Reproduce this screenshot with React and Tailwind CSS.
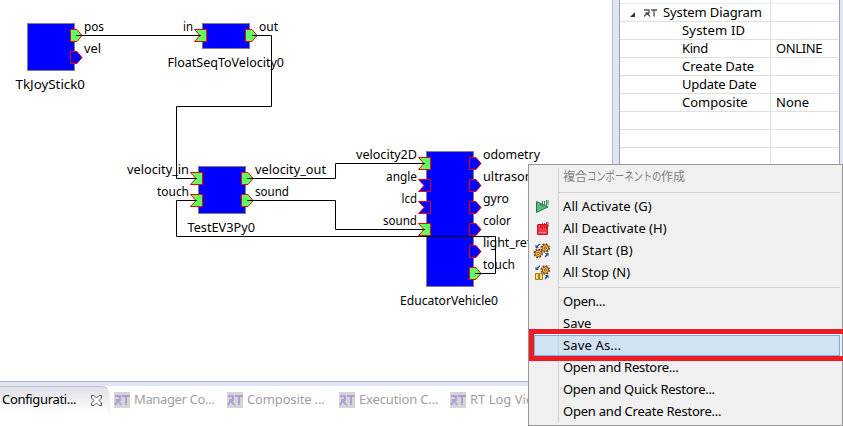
import React from "react";

function OutPort({ x, y, on }) {
  return (
    <path d={`M${x} ${y - 6} h6.5 l5 6 l-5 6 h-6.5 z`} fill={on ? "#60ff60" : "#0000ff"} stroke="#f00000" />
  );
}

function InPort({ x, y, on }) {
  return (
    <path d={`M${x} ${y - 6} h12 v12 h-12 l5.5 -6 z`} fill={on ? "#60ff60" : "#0000ff"} stroke="#f00000" strokeLinejoin="bevel" />
  );
}

const blocks = [
  [27.5, 23.5, 47, 47],
  [202.5, 23.5, 47, 25],
  [198.5, 166.5, 47, 47],
  [426.5, 151.5, 47, 135],
];

const outs = [
  [70.5, 35.5, true], [70.5, 57.5, false], [245.5, 35.5, true],
  [241.5, 178.5, true], [241.5, 200.5, true],
  [469.5, 163.5, false], [469.5, 185.5, false], [469.5, 207.5, false],
  [469.5, 229.5, false], [469.5, 251.5, false], [469.5, 273.5, true],
];

const ins = [
  [194.5, 35.5, true], [190.5, 178.5, true], [190.5, 200.5, true],
  [418.5, 163.5, true], [418.5, 185.5, false], [418.5, 207.5, false], [418.5, 229.5, true],
];

const wires = [
  "M76 35.5H201",
  "M252 35.5H271.5V106.5H176.5V178.5H197",
  "M247 178.5H335.5V163.5H425",
  "M247 200.5H335.5V229.5H425",
  "M475 273.5H495.5V236.5H176.5V200.5H197",
];

// x, baseline, width, text
const labels = [
  [84, 31, 20, "pos"], [84, 53, 17, "vel"], [183, 31, 10, "in"], [259, 31, 19, "out"],
  [15.5, 89, 69.5, "TkJoyStick0"], [167.5, 67, 116.5, "FloatSeqToVelocity0"],
  [127, 174, 62, "velocity_in"], [157, 196, 32, "touch"],
  [255, 174, 71, "velocity_out"], [255, 196, 34, "sound"], [187.5, 232, 67.5, "TestEV3Py0"],
  [356, 159, 61, "velocity2D"], [386, 181, 31, "angle"], [401.5, 203, 15.5, "lcd"], [383, 225, 34, "sound"],
  [483, 159, 57, "odometry"], [483, 181, 59, "ultrasonic"], [483, 203, 26, "gyro"],
  [483, 225, 28, "color"], [483, 247, 69, "light_reflect"], [483, 269, 32, "touch"],
  [400, 305, 98, "EducatorVehicle0"],
];

function Diagram() {
  return (
    <svg width="612" height="381" viewBox="0 0 612 381" className="block">
      {blocks.map(([x, y, w, h]) => (
        <rect key={`${x}-${y}`} x={x} y={y} width={w} height={h} fill="#0000ff" stroke="#808080" />
      ))}
      {outs.map(([x, y, on]) => <OutPort key={`${x}-${y}`} x={x} y={y} on={on} />)}
      {ins.map(([x, y, on]) => <InPort key={`${x}-${y}`} x={x} y={y} on={on} />)}
      {labels.map(([x, y, w, t]) => (
        <text key={`${x}-${y}`} x={x} y={y} textLength={w} lengthAdjust="spacingAndGlyphs" fontSize="13">{t}</text>
      ))}
      {wires.map((d) => <path key={d} d={d} fill="none" stroke="#000" />)}
    </svg>
  );
}

const props = [
  ["System ID", "", "tracking-[0.2px]"], ["Kind", "ONLINE", "tracking-[-0.4px]"], ["Create Date", "", ""], ["Update Date", "", "tracking-[-0.25px]"],
  ["Composite", "None", ""], ["", "", ""], ["", "", ""], ["", "", ""],
];

function Properties() {
  return (
    <div className="h-[381px] w-[221px] border-x border-[#a0a0a8] bg-white pr-px">
      <div className="flex h-1 border-b border-[#e8eef8]"><div className="w-[151px] border-r border-[#e0e0e0]" /></div>
      <div className="flex h-[18px] border-b border-[#e0e0e0]">
        <div className="flex w-[151px] items-center border-r border-[#e0e0e0] pl-[10px]">
          <svg width="5" height="5" className="mt-1"><path d="M5 0V5H0z" fill="#333" /></svg>
          <svg width="13" height="8" viewBox="0 0 13 8" className="ml-[9px] shrink-0" fill="none" stroke="#555" strokeWidth="1.4">
            <path d="M0 1H5V4H1.5M3 4L6 7.5M0 7.5L3 4M7 1H13M10 1V7.5" />
          </svg>
          <span className="ml-[6px] whitespace-nowrap leading-[17px] tracking-[-0.1px]">System Diagram</span>
        </div>
      </div>
      {props.map(([name, value, tracking], i) => (
        <div key={i} className={`flex h-[18px] border-b border-[#e0e0e0] leading-[17px] ${tracking}`}>
          <div className="w-[151px] border-r border-[#e0e0e0] pl-[62px] whitespace-nowrap">{name}</div>
          <div className="pl-[5px]">{value}</div>
        </div>
      ))}
    </div>
  );
}

function RTIcon() {
  return (
    <svg width="16" height="16" viewBox="0 0 16 16" className="shrink-0">
      <path d="M0 0H16V16H0z" fill="#d4d4d0" />
      <path d="M1 4H6V8H2M4 8L7 13M1 13L4 8M8 4H16M12 4V13" fill="none" stroke="#a9a0dc" strokeWidth="2" />
    </svg>
  );
}

function Tab({ children, width, tracking = "" }) {
  return (
    <div className={`flex shrink-0 items-center gap-1 whitespace-nowrap text-[#a0a0a0] ${width} ${tracking}`}>
      <RTIcon />
      <span>{children}</span>
    </div>
  );
}

function Tabs() {
  return (
    <div className="flex h-[40px] bg-white">
      <div className="flex h-[27px] w-[110px] shrink-0 items-center justify-between rounded-tr-lg border-t border-r border-t-[#c0c4d0] border-r-[#eeeeee] bg-gradient-to-b from-[#dfe0e6] to-white pr-[7px] pl-[2px]">
        <span className="whitespace-nowrap tracking-[-0.33px]">Configurati...</span>
        <svg width="11" height="11" viewBox="0 0 11 11" fill="white" stroke="#555" strokeWidth="1">
          <path d="M.5 .5H3L5.5 3L8 .5H10.5V3L8 5.5L10.5 8V10.5H8L5.5 8L3 10.5H.5V8L3 5.5L.5 3Z" />
        </svg>
      </div>
      <div className="flex h-[27px] pl-[4px]">
        <Tab width="w-[113px]" tracking="tracking-[-0.36px]">Manager Co...</Tab>
        <Tab width="w-[112px]" tracking="tracking-[-0.15px]">Composite ...</Tab>
        <Tab width="w-[111px]" tracking="tracking-[-0.15px]">Execution C...</Tab>
        <Tab width="w-[100px]">RT Log View</Tab>
      </div>
    </div>
  );
}

function Strokes({ color }) {
  return <path d="M6.5 4V7M8.5 2V8M10.5 2V7M12.5 1V8M14 1V6" fill="none" stroke={color} strokeWidth=".9" />;
}

function ActivateIcon() {
  return (
    <svg width="16" height="16" viewBox="0 0 16 16" stroke="#247d48">
      <path d="M2.5 2.5L14 8L2.5 13.5z" fill="#63b67f" />
      <Strokes color="#247d48" />
    </svg>
  );
}

function DeactivateIcon() {
  return (
    <svg width="16" height="16" viewBox="0 0 16 16" stroke="#c91628">
      <rect x="3.5" y="3.5" width="10" height="10" rx=".5" fill="#ef3d48" />
      <path d="M5 11.5H12" stroke="#ff7b80" />
      <Strokes color="#c91628" />
    </svg>
  );
}

function Gear({ x, y }) {
  return (
    <g transform={`translate(${x} ${y})`}>
      <circle r="4" fill="none" stroke="#7a4511" strokeWidth="1.6" strokeDasharray="1.8 1.34" />
      <circle r="3.2" fill="#f3bc55" stroke="#8a5118" />
      <circle r="1.1" fill="#fff5d8" stroke="#7b4311" strokeWidth=".9" />
    </g>
  );
}

function GearIcon({ paused }) {
  return (
    <svg width="16" height="16" viewBox="0 0 16 16" className="overflow-visible">
      <Gear x={11.3} y={5} />
      {paused ? (
        <path d="M1.5 8.5H4.5V14.5H1.5zM5.5 8.5H8.5V14.5H5.5z" fill="#f7df77" stroke="#a9781d" />
      ) : <Gear x={4.2} y={10.3} />}
      <path d="M6 1L3 3.5M14 10.5L11 14" fill="none" stroke="#22599e" strokeWidth="1.4" />
      <path d="M1.5 1.5V5H5zM11 10H14.5V13.5z" fill="#22599e" />
    </svg>
  );
}

function Item({ icon, children, muted, tracking = "" }) {
  return (
    <div className="flex h-[22px] items-center">
      <div className="flex w-[34px] shrink-0 pl-[5px]">{icon}</div>
      <span className={`whitespace-nowrap ${muted ? "text-[#808080]" : ""} ${tracking}`}>{children}</span>
    </div>
  );
}

function Separator() {
  return <div className="my-[3px] ml-[30px] mr-[2px] h-px bg-[#d4d4d4]" />;
}

function Menu() {
  return (
    <div className="absolute top-[164px] left-[528px] h-[262px] w-[315px] border border-[#979797] bg-[#f0f0f0] pt-px">
      <div className="absolute top-[3px] left-[29px] h-[255px] w-px bg-[#d4d4d4]" />
      <div className="absolute top-[170px] left-[5px] h-[21px] w-[306px] border border-[#78aee5] bg-[#d1e2f2]">
        <div className="ml-[23px] h-full w-px bg-[#c3d4e4]" />
      </div>
      <div className="relative">
        <Item muted>
          <span className="flex text-[12px]">
            <span>複合</span>
            <span className="w-[74px] origin-left scale-x-[0.775]">コンポーネントの</span>
            <span>作成</span>
          </span>
        </Item>
        <div className="h-[1px]" />
        <Separator />
        <Item icon={<ActivateIcon />} tracking="tracking-[0.07px]">All Activate (G)</Item>
        <Item icon={<DeactivateIcon />}>All Deactivate (H)</Item>
        <Item icon={<GearIcon />} tracking="tracking-[0.2px]">All Start (B)</Item>
        <Item icon={<GearIcon paused />}>All Stop (N)</Item>
        <Separator />
        <Item tracking="tracking-[-0.25px]">Open...</Item>
        <Item>Save</Item>
        <Item tracking="tracking-[0.15px]">Save As...</Item>
        <Item tracking="tracking-[-0.28px]">Open and Restore...</Item>
        <Item tracking="tracking-[-0.28px]">Open and Quick Restore...</Item>
        <Item tracking="tracking-[-0.22px]">Open and Create Restore...</Item>
      </div>
      <div className="absolute top-[164px] left-0 h-[32px] w-[320px] border-[5px] border-[#ed1c24]" />
    </div>
  );
}

export default function App() {
  return (
    <div className="relative h-[426px] w-[843px] overflow-hidden bg-white font-['Noto_Sans','Noto_Sans_CJK_JP',sans-serif] text-[13px] text-black">
      <div className="flex h-[381px] bg-[#dfe5f5]">
        <div className="w-[612px] bg-white"><Diagram /></div>
        <div className="mr-[6px] w-px bg-[#b4bbd0]" />
        <Properties />
      </div>
      <div className="h-[5px] border-t border-[#b0b5cc] bg-[#dfe5f5]" />
      <Tabs />
      <Menu />
    </div>
  );
}
